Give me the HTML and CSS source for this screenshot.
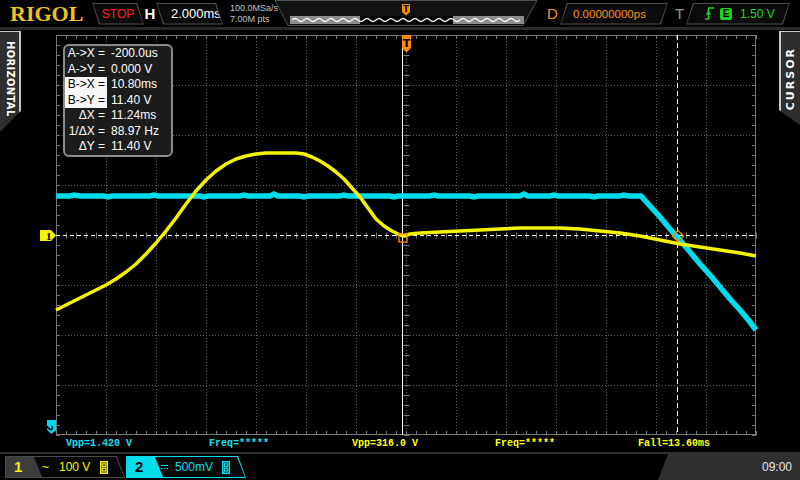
FILE: index.html
```html
<!DOCTYPE html>
<html>
<head>
<meta charset="utf-8">
<title>RIGOL</title>
<link rel="stylesheet" href="styles.css">
</head>
<body>
<div class="scope-ui">
  <header class="top">
    <div class="logo">RIGOL</div>
    <div class="box box-back stop"><div class="in">STOP</div></div>
    <div class="hlabel">H</div>
    <div class="box box-back tb"><div class="in">2.000ms</div></div>
    <div class="srate">100.0MSa/s<br>7.00M pts</div>
    <svg class="overview" width="278" height="27" viewBox="0 0 278 27">
      <polygon points="13,0.5 275,0.5 261,25.5 26,25.5" fill="#121212" stroke="#505050" stroke-width="1"/>
      <rect x="28" y="16" width="234" height="8" fill="#8c8c8c"/>
      <rect x="98" y="16" width="93" height="8" fill="#000"/>
      <path d="M30 20 q3 -3 6 0 t6 0 t6 0 t6 0 t6 0 t6 0 t6 0 t6 0 t6 0 t6 0 t6 0 t6 0 t6 0 t6 0 t6 0 t6 0 t6 0 t6 0 t6 0 t6 0 t6 0 t6 0 t6 0 t6 0 t6 0 t6 0 t6 0 t6 0 t6 0 t6 0 t6 0 t6 0 t6 0 t6 0 t6 0 t6 0 t6 0 t6 0" fill="none" stroke="#fff" stroke-width="1.2"/>
      <polygon points="140,4 148,4 148,12 144,15.5 140,12" fill="#ff8a00"/>
      <text x="144" y="11.5" class="tmark">T</text>
    </svg>
    <div class="dlabel">D</div>
    <div class="box box-fwd dbox"><div class="in">0.00000000ps</div></div>
    <div class="tlabel">T</div>
    <div class="box box-fwd tbox">
      <div class="in">
        <svg class="edge" width="9" height="13" viewBox="0 0 9 13">
          <path d="M0 12 H3.5 V1 H9" fill="none" stroke="#19d419" stroke-width="1.6"/>
          <polygon points="3.5,3.5 0.8,7.5 6.2,7.5" fill="#19d419"/>
        </svg>
        <span class="ebox">E</span>
        <span class="tlevel">1.50 V</span>
      </div>
    </div>
  </header>

  <main class="screen">
    <aside class="lside">
      <div class="vtab htab"><span>HORIZONTAL</span></div>
    </aside>

    <section class="scope">
      <div class="plot">
        <svg class="grid" width="700" height="405" viewBox="56 30 700 405">
          <path class="dots" d="M106.5 35V435M156.5 35V435M206.5 35V435M256.5 35V435M306.5 35V435M356.5 35V435M456.5 35V435M506.5 35V435M556.5 35V435M606.5 35V435M656.5 35V435M706.5 35V435M56 85.5H756M56 135.5H756M56 185.5H756M56 285.5H756M56 335.5H756M56 385.5H756M406.5 35V435"/>
          <rect x="56.5" y="35.5" width="699" height="399" fill="none" stroke="#767676"/>
          <line class="tick" x1="58" y1="35" x2="58" y2="436" stroke-width="4"/>
          <line class="tick" x1="754" y1="35" x2="754" y2="436" stroke-width="4"/>
          <line class="tick" x1="56" y1="37" x2="757" y2="37" stroke-width="4"/>
          <line class="tick" x1="56" y1="433" x2="757" y2="433" stroke-width="4"/>
          <line class="tick" x1="406.5" y1="35" x2="406.5" y2="436" stroke-width="6"/>
          <line class="tick" x1="56" y1="235.5" x2="757" y2="235.5" stroke-width="6"/>

          <line x1="56" y1="235.5" x2="756" y2="235.5" stroke="#fff" stroke-dasharray="4 3"/>
          <line x1="402.5" y1="35" x2="402.5" y2="435" stroke="#fff"/>
          <line x1="677.5" y1="35" x2="677.5" y2="435" stroke="#fff" stroke-dasharray="5 3"/>

          <polygon points="402,35 411,35 411,48 406.5,52.5 402,48" fill="#ff8a00"/>
          <text x="406.5" y="47" class="tmark2">T</text>

          <polyline class="ch2" points="56,196 70,196 74,195 80,196 104,196 108,197 112,196 150,196 154,195 158,196 200,196 204,197 208,196 240,196 244,195 248,196 270,196 274,194 278,196 300,196 304,197 308,196 340,196 344,195 348,196 390,196 394,197 398,196 430,196 434,195 438,196 470,196 474,197 478,196 520,196 524,194 528,196 550,196 554,195 558,196 590,196 594,197 598,196 620,196 624,195 628,196 641,196 650,206 660,217 670,229 680,240 690,252 700,264 710,275 720,287 730,299 740,310 750,322 756,330"/>
          <polyline class="ch1" points="56,310 66,305 76,300 86,295 96,290 106,285 116,279 126,272 136,264 146,254 156,243 166,231 176,218 186,204 196,191 206,180 216,171 226,164 236,159 246,156 256,154 266,153 276,153 286,153 296,153 304,154 312,157 320,161 328,166 336,172 344,179 352,188 360,197 368,208 376,219 384,226 392,231 400,235 404,236 410,234 420,233 440,232 460,231 480,230 500,229 520,228 540,228 560,228 580,229 600,231 620,233 640,236 660,240 680,244 700,247 720,250 740,253 756,256"/>

          <rect x="399" y="234" width="8" height="8" fill="none" stroke="#ff8a00" stroke-width="1.3"/>
          <rect x="674" y="232" width="8" height="8" fill="none" stroke="#ff8a00" stroke-width="1.3" transform="rotate(45 678 236)"/>

          <polygon points="40,230 51,230 56,235.5 51,241 40,241" fill="#f4f400"/>
          <text x="46" y="240" class="m1">1</text>
          <polygon points="47,420 56,420 56,430 51.5,434 47,430" fill="#00dcec"/>
          <text x="0" y="0" class="m2" transform="translate(48.5 425) rotate(90)">2</text>
        </svg>

        <div class="cursorbox">
          <span class="lbl">A-&gt;X =</span><span class="val">-200.0us</span>
          <span class="lbl">A-&gt;Y =</span><span class="val">0.000 V</span>
          <span class="lbl hl">B-&gt;X =</span><span class="val">10.80ms</span>
          <span class="lbl hl">B-&gt;Y =</span><span class="val">11.40 V</span>
          <span class="lbl">ΔX =</span><span class="val">11.24ms</span>
          <span class="lbl">1/ΔX =</span><span class="val">88.97 Hz</span>
          <span class="lbl">ΔY =</span><span class="val">11.40 V</span>
        </div>
      </div>

      <div class="meas">
        <span class="mi cy">Vpp=1.420 V</span>
        <span class="mi cy">Freq=*****</span>
        <span class="mi ye">Vpp=316.0 V</span>
        <span class="mi ye">Freq=*****</span>
        <span class="mi ye">Fall=13.60ms</span>
      </div>
    </section>

    <aside class="rside">
      <div class="vtab ctab"><span>CURSOR</span></div>
    </aside>
  </main>

  <footer class="bottom">
    <div class="chtab ch1tab">
      <div class="chnum">1</div>
      <div class="chinfo">
        <span class="coup">~</span>
        <span class="scale">100 V</span>
        <svg class="bw" width="8" height="13" viewBox="0 0 8 13">
          <rect x="0.75" y="0.75" width="6.5" height="11.5" fill="none" stroke="currentColor" stroke-width="1.5"/>
          <rect x="2.5" y="2.8" width="3" height="2.8" fill="none" stroke="currentColor" stroke-width="1.2"/>
          <rect x="2.5" y="7.3" width="3" height="2.8" fill="none" stroke="currentColor" stroke-width="1.2"/>
        </svg>
      </div>
    </div>
    <div class="chtab ch2tab">
      <div class="chnum">2</div>
      <div class="chinfo">
        <svg class="dc" width="7" height="6" viewBox="0 0 7 6">
          <path d="M0 1.5H7" stroke="currentColor" stroke-width="1.2"/>
          <path d="M0 4.5H1.5M2.75 4.5H4.25M5.5 4.5H7" stroke="currentColor" stroke-width="1.2"/>
        </svg>
        <span class="scale">500mV</span>
        <svg class="bw" width="8" height="13" viewBox="0 0 8 13">
          <rect x="0.75" y="0.75" width="6.5" height="11.5" fill="none" stroke="currentColor" stroke-width="1.5"/>
          <rect x="2.5" y="2.8" width="3" height="2.8" fill="none" stroke="currentColor" stroke-width="1.2"/>
          <rect x="2.5" y="7.3" width="3" height="2.8" fill="none" stroke="currentColor" stroke-width="1.2"/>
        </svg>
      </div>
    </div>
    <div class="clock">09:00</div>
  </footer>
</div>
</body>
</html>
```

FILE: styles.css
```css
* {
  box-sizing: border-box;
  margin: 0;
  padding: 0;
}

body {
  margin: 0;
  width: 800px;
  height: 480px;
  overflow: hidden;
  background: #000;
  color: #fff;
  font-family: "Liberation Sans", Arial, sans-serif;
}

.scope-ui {
  width: 800px;
  height: 480px;
  display: flex;
  flex-direction: column;
}

/* ---------- top bar ---------- */
.top {
  flex: none;
  height: 30px;
  border-bottom: 3px solid #2a2a2a;
  display: flex;
  align-items: center;
}

.logo {
  flex: none;
  margin-left: 10px;
  width: 72px;
  font-family: "Liberation Serif", "Times New Roman", serif;
  font-weight: bold;
  font-size: 22px;
  line-height: 22px;
  color: #f2c21b;
}

.box {
  flex: none;
  height: 22px;
  padding: 1px;
  background: #4c4c4c;
}

.box .in {
  height: 100%;
  background: #0b0b0b;
  display: flex;
  align-items: center;
  white-space: nowrap;
}

.box-back,
.box-back .in {
  clip-path: polygon(0 0, calc(100% - 7px) 0, 100% 100%, 7px 100%);
}

.box-fwd,
.box-fwd .in {
  clip-path: polygon(7px 0, 100% 0, calc(100% - 7px) 100%, 0 100%);
}

.stop {
  margin-left: 10px;
  width: 52px;
}

.stop .in {
  justify-content: center;
  color: #ff1e1e;
  font-size: 12px;
}

.hlabel {
  flex: none;
  width: 12px;
  text-align: center;
  font-weight: bold;
  font-size: 15px;
  color: #fff;
}

.tb {
  width: 67px;
}

.tb .in {
  padding-left: 14px;
  font-size: 13px;
  color: #fff;
}

.srate {
  flex: none;
  position: relative;
  z-index: 1;
  margin-left: 7px;
  width: 32px;
  font-size: 9px;
  line-height: 11px;
  color: #c4c4c4;
  white-space: nowrap;
}

.overview {
  flex: none;
  display: block;
}

.tmark {
  font-family: "DejaVu Sans", sans-serif;
  font-weight: bold;
  font-size: 8px;
  text-anchor: middle;
  fill: #000;
}

.dlabel {
  flex: none;
  margin-left: 7px;
  width: 12px;
  font-size: 15px;
  color: #f7941d;
}

.dbox {
  margin-left: 1px;
  width: 108px;
}

.dbox .in {
  padding-left: 12px;
  font-size: 11.5px;
  color: #f7941d;
}

.tlabel {
  flex: none;
  margin-left: 7px;
  width: 10px;
  font-size: 15px;
  color: #9a9a9a;
}

.tbox {
  margin-left: 1px;
  width: 104px;
}

.tbox .in {
  padding-left: 18px;
  gap: 6px;
}

.edge {
  display: block;
}

.ebox {
  display: inline-block;
  width: 12px;
  height: 12px;
  border-radius: 2px;
  background: #19d419;
  color: #000;
  font-weight: bold;
  font-size: 10px;
  line-height: 12px;
  text-align: center;
}

.tlevel {
  margin-left: 2px;
  font-size: 12px;
  color: #19d419;
}

/* ---------- screen ---------- */
.screen {
  flex: none;
  height: 422px;
  display: flex;
}

.lside {
  flex: none;
  width: 56px;
  padding-top: 1px;
}

.rside {
  flex: none;
  width: 44px;
  padding-top: 1px;
  display: flex;
  justify-content: flex-end;
  align-items: flex-start;
}

.vtab {
  width: 21px;
  background: #2e2e2e;
  color: #fff;
  font-family: "DejaVu Sans", sans-serif;
  font-weight: bold;
  font-size: 10px;
  display: flex;
  justify-content: center;
  align-items: flex-start;
}

.vtab span {
  writing-mode: vertical-rl;
  line-height: 12px;
}

.htab {
  height: 101px;
  border-top: 1px solid #c8c8c8;
  border-right: 2px solid #c8c8c8;
  padding-top: 9px;
  clip-path: polygon(0 0, 100% 0, 100% 79%, 0 100%);
}

.htab span {
  letter-spacing: 0.3px;
}

.ctab {
  height: 94px;
  border-top: 1px solid #c8c8c8;
  border-left: 2px solid #c8c8c8;
  padding-top: 15px;
  clip-path: polygon(0 0, 100% 0, 100% 100%, 0 84%);
}

.ctab span {
  transform: rotate(180deg);
  font-size: 11px;
  letter-spacing: 2px;
}

.scope {
  flex: none;
  width: 700px;
  display: flex;
  flex-direction: column;
}

.plot {
  position: relative;
  height: 405px;
}

.grid {
  display: block;
  overflow: visible;
}

.dots {
  fill: none;
  stroke: #5e5e5e;
  stroke-width: 1;
  stroke-dasharray: 1 2;
}

.tick {
  stroke: #767676;
  stroke-dasharray: 1 9;
}

.tmark2 {
  font-family: "DejaVu Sans", sans-serif;
  font-weight: bold;
  font-size: 11px;
  text-anchor: middle;
  fill: #000;
}

.ch1 {
  fill: none;
  stroke: #f4f400;
  stroke-width: 3.5;
  stroke-linejoin: round;
}

.ch2 {
  fill: none;
  stroke: #00dcec;
  stroke-width: 5.5;
  stroke-linejoin: miter;
}

.m1 {
  font-family: "Liberation Serif", serif;
  font-weight: bold;
  font-size: 11px;
  fill: #000;
}

.m2 {
  font-family: "DejaVu Sans", sans-serif;
  font-weight: bold;
  font-size: 9px;
  fill: #000;
  dominant-baseline: central;
}

.cursorbox {
  position: absolute;
  left: 7px;
  top: 14px;
  width: 110px;
  border: 2px solid #8c8c8c;
  border-radius: 6px;
  background: #1c1c1c;
  display: grid;
  grid-template-columns: 42px 1fr;
  grid-auto-rows: 15.5px;
  column-gap: 4px;
  font-size: 12px;
  line-height: 15.5px;
  color: #fff;
  white-space: nowrap;
}

.cursorbox .lbl {
  text-align: right;
  padding-right: 2px;
}

.cursorbox .lbl.hl {
  background: #f6f6f6;
  color: #000;
}

.meas {
  flex: none;
  height: 17px;
  padding-left: 10px;
  display: flex;
  align-items: center;
}

.mi {
  flex: none;
  width: 143px;
  font-family: "Liberation Mono", "Courier New", monospace;
  font-weight: bold;
  font-size: 10px;
  white-space: nowrap;
}

.cy { color: #16e0f0; }
.ye { color: #ffff10; }

/* ---------- bottom bar ---------- */
.bottom {
  flex: none;
  height: 28px;
  border-top: 2px solid #2f2f2f;
  display: flex;
  align-items: center;
}

.chtab {
  flex: none;
  width: 120px;
  height: 22px;
  padding: 1px;
  display: flex;
  clip-path: polygon(0 0, 112px 0, 120px 100%, 0 100%);
}

.ch1tab {
  margin-left: 5px;
  background: #4a4a4a;
  color: #f4f400;
}

.ch2tab {
  margin-left: 1px;
  background: #00dcec;
  color: #00dcec;
}

.chnum {
  flex: none;
  width: 36px;
  padding-left: 8px;
  font-weight: bold;
  font-size: 15px;
  line-height: 20px;
  clip-path: polygon(0 0, 28px 0, 36px 100%, 0 100%);
}

.ch1tab .chnum {
  background: #3c3c3c;
  color: #f4f400;
}

.ch2tab .chnum {
  background: #00dcec;
  color: #000;
}

.chinfo {
  flex: 1;
  margin-left: -8px;
  background: #080808;
  display: flex;
  align-items: center;
  font-size: 12px;
  white-space: nowrap;
  clip-path: polygon(0 0, calc(100% - 8px) 0, 100% 100%, 8px 100%);
}

.ch1tab .chinfo {
  padding-left: 8px;
}

.ch1tab .coup {
  width: 17px;
  font-size: 12px;
}

.ch1tab .scale {
  width: 41px;
}

.ch2tab .chinfo {
  padding-left: 6px;
}

.ch2tab .dc {
  margin-right: 7px;
}

.ch2tab .scale {
  width: 47px;
}

.bw {
  display: block;
}

.clock {
  margin-left: auto;
  align-self: stretch;
  width: 142px;
  background: #303030;
  clip-path: polygon(10px 0, 100% 0, 100% 100%, 0 100%);
  display: flex;
  align-items: center;
  justify-content: flex-end;
  padding-right: 8px;
  font-size: 12px;
  color: #e6e6e6;
}
```
